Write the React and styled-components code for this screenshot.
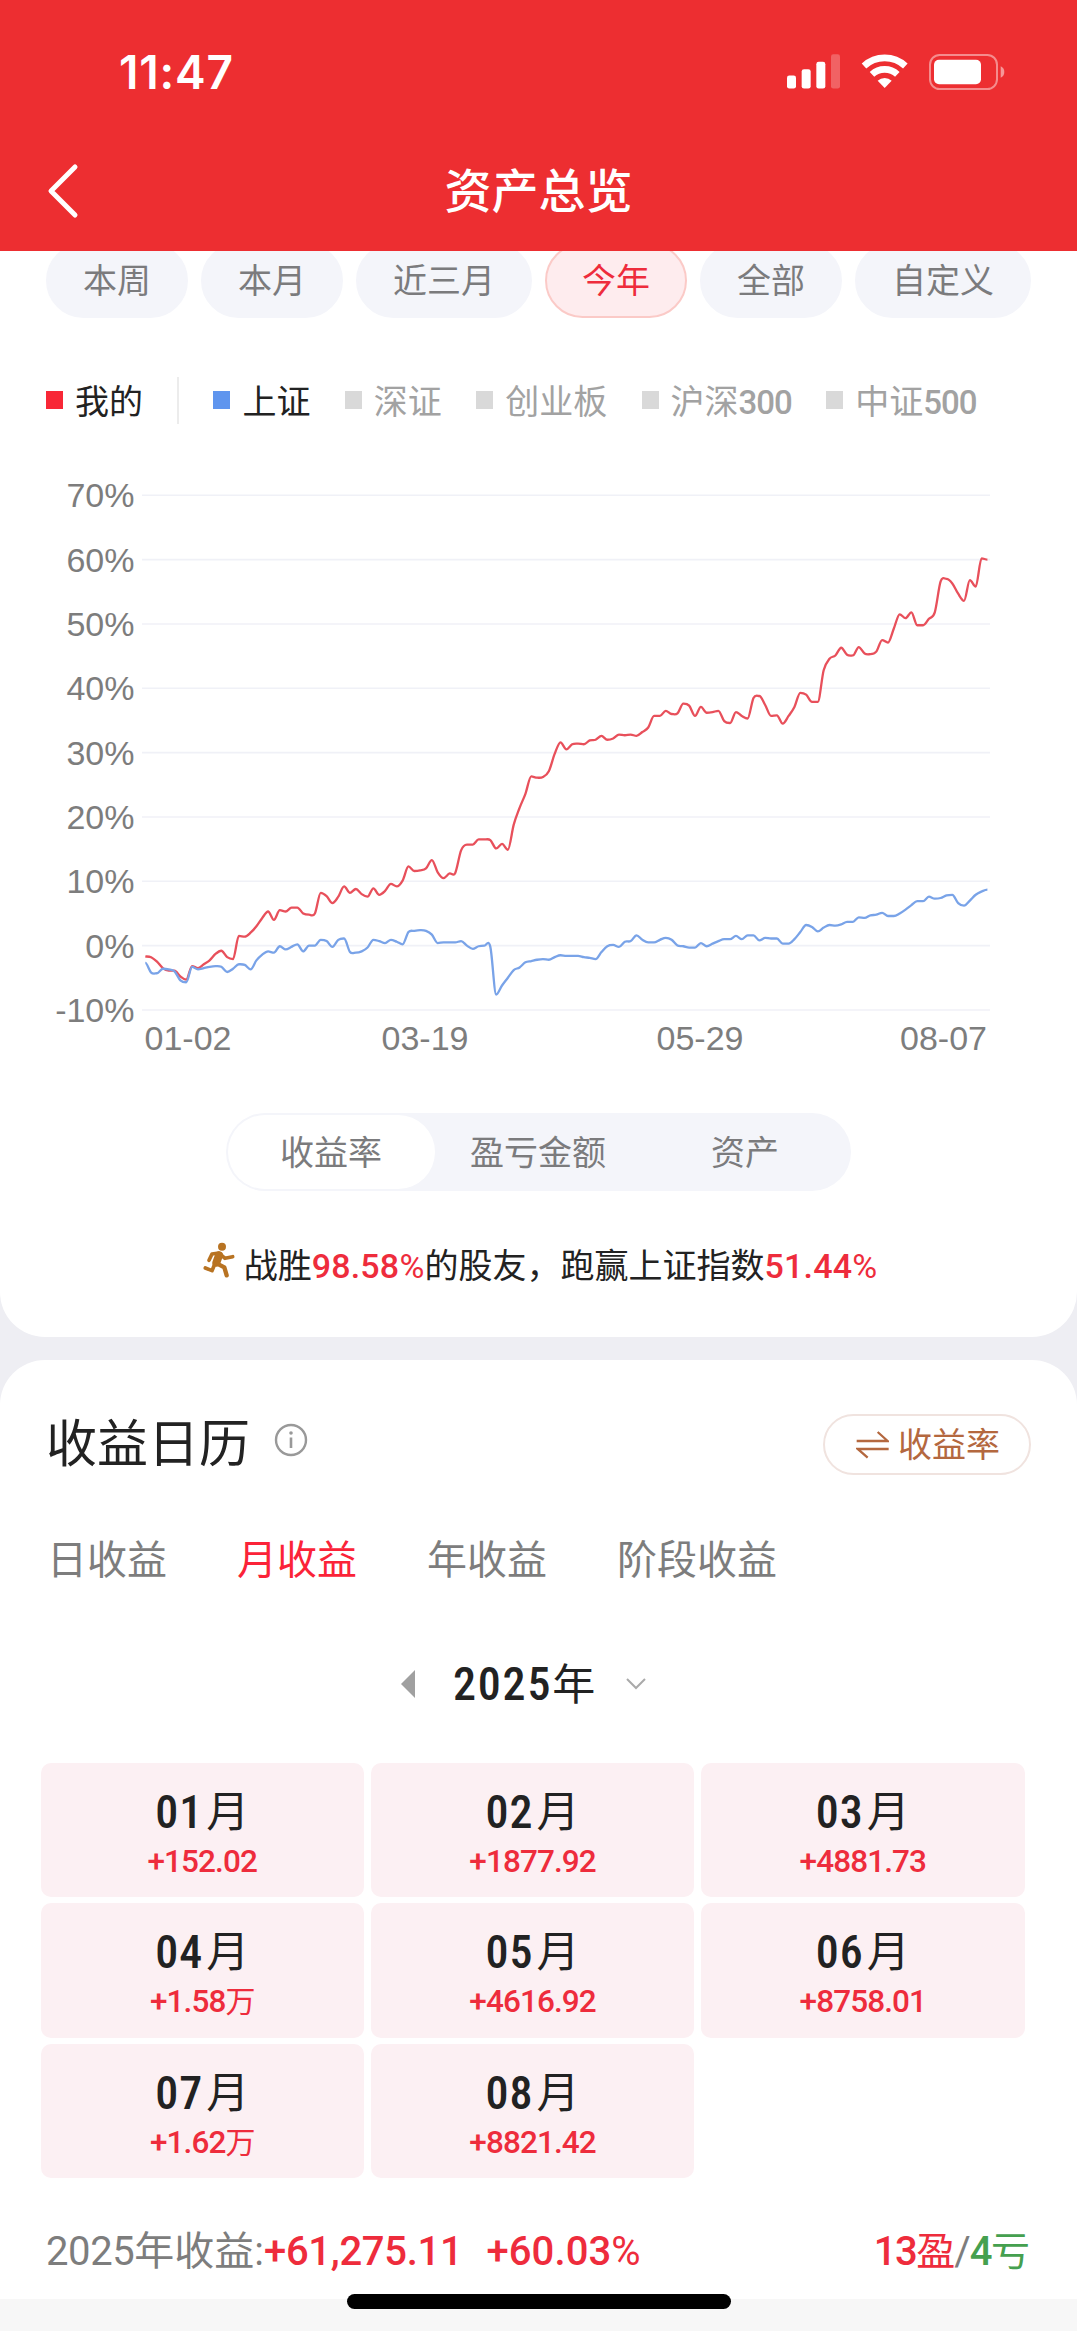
import styled, { createGlobalStyle } from "styled-components";

const GlobalStyle = createGlobalStyle`
  * {
    box-sizing: border-box;
  }

  body {
    margin: 0;
    background-color: #eeeef3;
    font-family: Roboto, "Noto Sans CJK SC", sans-serif;
    line-height: 1;
  }
`;

const Page = styled.div`
  position: relative;
  width: 1077px;
  height: 2331px;
  overflow: hidden;
  background-color: #eeeef3;
`;

const Header = styled.header`
  position: relative;
  z-index: 1;
  height: 251px;
  background-color: #ed2e31;
  color: #fff;
`;

const StatusBar = styled.div`
  display: flex;
  justify-content: space-between;
  align-items: center;
  height: 142px;
  padding: 1px 72px 0 119px;
`;

const Clock = styled.span`
  font-family: Inter, sans-serif;
  font-size: 46px;
  font-weight: 600;
  letter-spacing: 0.8px;
`;

const StatusIcons = styled.div`
  display: flex;
  align-items: center;
  gap: 21px;
`;

const NavBar = styled.div`
  display: grid;
  grid-template-columns: 120px 1fr 120px;
  align-items: center;
  height: 98px;
`;

const BackIcon = styled.svg`
  margin-left: 46px;
`;

const NavTitle = styled.h1`
  margin: 0;
  text-align: center;
  font-size: 47px;
  font-weight: 500;
`;

const Card = styled.section`
  background-color: #fff;
  border-radius: ${(props) => props.$radius};
  overflow: hidden;
`;

const ChartCard = styled(Card)`
  height: 1086px;
`;

const CalendarCard = styled(Card)`
  height: 939px;
  margin-top: 23px;
  padding-top: 54px;
`;

const RangeList = styled.div`
  display: flex;
  gap: 13px;
  margin: -8px 46px 0;
`;

const RangeItem = styled.button`
  width: ${(props) => (props.$wide ? 176 : 142)}px;
  height: 75px;
  padding: 0 0 4px;
  border: 2px solid ${(props) => (props.$active ? "#fbcac7" : "#f4f5fa")};
  border-radius: 38px;
  background-color: ${(props) => (props.$active ? "#feecee" : "#f4f5fa")};
  color: ${(props) => (props.$active ? "#ee2c3c" : "#7b7b7d")};
  font-family: inherit;
  font-size: 34px;
`;

const Legend = styled.div`
  display: flex;
  align-items: center;
  height: 48px;
  margin: 58px 0 0 46px;
`;

const LegendItem = styled.div`
  display: flex;
  align-items: center;
  margin-right: 34.4px;
  color: ${(props) => (props.$on ? "#222" : "#a2a2a2")};
  font-size: 34px;
  white-space: nowrap;
`;

const LegendMark = styled.span`
  width: 17px;
  height: 18px;
  margin-right: 12px;
  background-color: ${(props) => props.$color};
`;

const LegendDivider = styled.span`
  width: 2px;
  height: 47px;
  margin-right: 34px;
  background-color: #ececec;
`;

const LegendName = styled.span`
  padding-top: 4px;
`;

const LegendNumber = styled.span`
  font-size: 33px;
  font-weight: 500;
  letter-spacing: -1px;
`;

const Chart = styled.svg`
  display: block;
  margin-top: 36px;
  font-family: "Liberation Sans", sans-serif;
  font-size: 34px;
`;

const Segmented = styled.div`
  display: flex;
  width: 625px;
  height: 78px;
  margin: 53px auto 0;
  padding: 2px;
  border-radius: 39px;
  background-color: #f4f5fa;
`;

const Segment = styled.button`
  flex: 1;
  padding: 0 1px 4px 0;
  border: none;
  border-radius: 37px;
  background-color: ${(props) => (props.$active ? "#fff" : "transparent")};
  color: #7b7b7d;
  font-family: inherit;
  font-size: 34px;
`;

const BeatLine = styled.p`
  display: flex;
  justify-content: center;
  align-items: center;
  height: 40px;
  margin: 55px 0 0;
  padding-left: 3px;
  color: #222;
  font-size: 34px;
  white-space: nowrap;
`;

const RunnerIcon = styled.svg`
  margin: -12px 9px 0 0;
`;

const Rate = styled.span`
  color: #ee2c3c;
  font-weight: 500;
  letter-spacing: 0.2px;
`;

const Percent = styled.span`
  font-weight: 400;
`;

const CardHead = styled.div`
  display: flex;
  align-items: center;
  height: 61px;
  padding: 0 46px;
`;

const CardTitle = styled.h2`
  margin: 0;
  color: #222;
  font-size: 51px;
  font-weight: 400;
`;

const InfoIcon = styled.svg`
  margin: -10px 0 0 24px;
`;

const SwitchButton = styled.button`
  display: flex;
  align-items: center;
  gap: 9px;
  width: 208px;
  height: 61px;
  margin-left: auto;
  padding: 0 0 0 31px;
  border: 2px solid #f0e3df;
  border-radius: 31px;
  background-color: #fff;
  color: #b4683f;
  font-family: inherit;
  font-size: 34px;
`;

const SwitchLabel = styled.span`
  padding-bottom: 4px;
`;

const Tabs = styled.div`
  display: flex;
  gap: 70px;
  height: 40px;
  margin: 66px 0 0 47px;
`;

const Tab = styled.span`
  color: ${(props) => (props.$active ? "#fb2338" : "#7d7d7d")};
  font-size: 40px;
  line-height: 40px;
`;

const YearPicker = styled.div`
  display: flex;
  align-items: center;
  height: 46px;
  margin: 80px 0 0 401px;
`;

const YearText = styled.span`
  margin: 0 31px 0 38px;
  color: #222;
  font-size: 43px;
`;

const BigNumber = styled.span`
  font-size: 46px;
  font-weight: 500;
  font-stretch: 75%;
  letter-spacing: ${(props) => props.$spacing || 1}px;
`;

const MonthGrid = styled.div`
  display: grid;
  grid-template-columns: repeat(3, 323.5px);
  grid-auto-rows: 134.5px;
  gap: 6px 6.8px;
  margin: 55.5px 0 0 40.5px;
`;

const MonthCell = styled.div`
  display: flex;
  flex-direction: column;
  align-items: center;
  padding-top: 26px;
  border-radius: 10px;
  background-color: #fcf0f3;
`;

const MonthName = styled.span`
  display: flex;
  gap: 3px;
  height: 46px;
  color: #222;
  font-size: 43px;
  line-height: 46px;
`;

const MonthAmount = styled.span`
  height: 32px;
  margin-top: 11px;
  color: #ee2c3c;
  font-size: 31.5px;
  font-weight: 500;
  letter-spacing: -0.9px;
  line-height: 32px;
`;

const Wan = styled.span`
  font-size: 30px;
  font-weight: 400;
`;

const Summary = styled.div`
  display: flex;
  align-items: center;
  height: 40px;
  margin: 54px 48px 0 46px;
  color: #7d7d7d;
  font-size: 40px;
  white-space: pre;
`;

const SummaryNumber = styled.span`
  color: ${(props) => props.$color || "#ee2c3c"};
  font-weight: ${(props) => props.$weight || 500};
  letter-spacing: ${(props) => props.$spacing || 0}px;
`;

const SummaryRate = styled(SummaryNumber)`
  margin-left: 24px;
`;

const WinLoss = styled.span`
  margin-left: auto;
  letter-spacing: -1px;
`;

const Colored = styled.span`
  color: ${(props) => props.$color};
  font-size: 39px;
`;

const BottomArea = styled.div`
  height: 32px;
  background-color: #f7f7f7;
`;

const HomeIndicator = styled.div`
  position: absolute;
  left: 347px;
  bottom: 22px;
  width: 384px;
  height: 15px;
  border-radius: 8px;
  background-color: #000;
`;

const ranges = [
  { label: "本周" },
  { label: "本月" },
  { label: "近三月", wide: true },
  { label: "今年", active: true },
  { label: "全部" },
  { label: "自定义", wide: true },
];

const indexes = [
  { name: "上证", color: "#5f95ee", on: true },
  { name: "深证", color: "#d9d9d9" },
  { name: "创业板", color: "#d9d9d9" },
  { name: "沪深", number: "300", color: "#d9d9d9" },
  { name: "中证", number: "500", color: "#d9d9d9" },
];

const months = [
  { month: "01", amount: "+152.02" },
  { month: "02", amount: "+1877.92" },
  { month: "03", amount: "+4881.73" },
  { month: "04", amount: "+1.58", wan: true },
  { month: "05", amount: "+4616.92" },
  { month: "06", amount: "+8758.01" },
  { month: "07", amount: "+1.62", wan: true },
  { month: "08", amount: "+8821.42" },
];

// daily return in percent, one value per trading day
const mine = [
  -1.7, -1.8, -2.5, -3.5, -3.9, -3.9, -4.8, -5.3, -3.2, -3.5, -2.9, -2.3, -1.3,
  -0.8, -1.8, -2.1, 1.5, 1.4, 2.0, 3.0, 4.3, 5.3, 4.0, 5.5, 5.3, 5.9, 5.9, 5.0,
  4.8, 5.0, 8.2, 7.7, 6.6, 7.6, 9.2, 8.2, 8.8, 8.0, 7.6, 8.9, 7.9, 8.5, 9.6,
  9.2, 10.1, 12.3, 11.6, 11.7, 12.0, 13.3, 11.4, 10.5, 11.2, 11.3, 14.8, 15.7,
  15.7, 16.5, 16.5, 16.4, 15.1, 15.8, 14.9, 18.8, 21.4, 23.6, 26.3, 26.1, 26.2,
  27.1, 29.8, 31.6, 30.5, 31.3, 31.4, 31.3, 31.9, 32.0, 32.6, 32.0, 32.2, 32.8,
  32.7, 32.8, 32.6, 33.2, 33.9, 35.7, 35.7, 36.5, 36.0, 36.1, 37.6, 37.3, 35.7,
  37.1, 36.2, 36.3, 36.5, 34.9, 34.6, 36.3, 35.7, 35.3, 38.5, 38.8, 37.4, 35.7,
  35.8, 34.5, 35.7, 37.1, 39.3, 39.0, 37.9, 37.9, 42.8, 44.6, 45.1, 46.3, 45.2,
  45.1, 46.4, 45.4, 45.3, 45.7, 47.5, 47.1, 49.3, 51.5, 50.9, 51.8, 49.8, 49.8,
  50.8, 51.8, 56.6, 57.0, 56.3, 54.7, 53.6, 56.8, 55.8, 60.2, 60.0,
];

const shanghai = [
  -2.7, -4.2, -4.3, -3.6, -3.7, -4.0, -5.4, -5.7, -3.3, -3.7, -3.5, -3.3, -3.2,
  -3.3, -4.1, -3.6, -2.9, -3.0, -3.7, -2.3, -1.4, -0.9, -1.1, -0.1, -0.6, -0.2,
  0.2, -0.9, 0, 0, 0.9, 0.7, -0.2, 0.9, 1.1, -1.0, -1.1, -0.9, -0.3, 0.9, 0.7,
  0.4, 0.9, 0.6, 0.2, 2.1, 2.3, 2.4, 2.3, 1.7, 0.4, 0.5, 0.5, 0.5, 0.7, 0,
  -0.5, -0.1, 0, -0.2, -7.6, -6.2, -5.0, -3.8, -3.4, -2.6, -2.4, -2.2, -2.1,
  -2.2, -1.8, -1.5, -1.6, -1.6, -1.6, -1.8, -1.9, -2.1, -1.0, -0.1, 0.1, -0.2,
  0.6, 0.7, 1.6, 0.9, 0.5, 0.5, 0.9, 1.2, 0.9, 0, -0.1, -0.3, -0.3, 0.4, -0.1,
  0.3, 0.7, 1.0, 1.0, 1.5, 1.0, 1.6, 1.6, 0.8, 1.2, 1.1, 1.1, 0.3, 0.3, 1.0,
  2.1, 3.2, 2.9, 2.2, 2.8, 3.2, 3.1, 3.3, 3.7, 3.7, 4.4, 4.3, 4.7, 4.8, 5.1,
  4.6, 4.6, 5.0, 5.6, 6.3, 6.9, 6.9, 7.6, 7.3, 7.4, 7.8, 7.9, 6.6, 6.2, 7.0,
  7.9, 8.4, 8.7,
];

const ticks = [70, 60, 50, 40, 30, 20, 10, 0, -10];

const dates = [
  { x: 144.5, label: "01-02" },
  { x: 381.5, label: "03-19" },
  { x: 656.5, label: "05-29" },
  { x: 900, label: "08-07" },
];

const toX = (i) => 145.3 + i * 5.848;
const toY = (value) => 485.6 - value * 6.433;

// smooth curve that stays flat on every local peak and dip
const toPath = (values) => {
  const slope = values.map((value, i) => {
    const before = value - values[i - 1];
    const after = values[i + 1] - value;
    return before * after > 0 ? (before + after) / 2 : 0;
  });

  return values
    .map((value, i) => {
      if (i === 0) return `M${toX(0)} ${toY(value)}`;
      const c1 = `${toX(i - 0.67)} ${toY(values[i - 1] + slope[i - 1] / 3)}`;
      const c2 = `${toX(i - 0.33)} ${toY(value - slope[i] / 3)}`;
      return `C${c1} ${c2} ${toX(i)} ${toY(value)}`;
    })
    .join(" ");
};

const ReturnChart = () => {
  return (
    <Chart width="1077" height="600" viewBox="0 0 1077 600" fill="#7d7d7d">
      {ticks.map((tick) => (
        <g key={tick}>
          <line
            x1="142"
            x2="990"
            y1={toY(tick)}
            y2={toY(tick)}
            stroke="#f0f1f7"
            strokeWidth="1.6"
          />
          <text x="134.5" y={toY(tick) + 12} textAnchor="end">
            {tick}%
          </text>
        </g>
      ))}
      <path d={toPath(mine)} fill="none" stroke="#e8505b" strokeWidth="2.3" />
      <path
        d={toPath(shanghai)}
        fill="none"
        stroke="#79a3e8"
        strokeWidth="2.3"
      />
      {dates.map((date) => (
        <text key={date.label} x={date.x} y="590">
          {date.label}
        </text>
      ))}
    </Chart>
  );
};

const PhoneStatus = () => {
  return (
    <StatusIcons>
      <svg width="53" height="35" viewBox="84 72 159 104" fill="#fff">
        <rect x="84" y="136" width="27" height="39" rx="7" />
        <rect x="128" y="117" width="27" height="58" rx="7" />
        <rect x="172" y="95" width="27" height="80" rx="7" />
        <rect x="216" y="72" width="27" height="103" rx="7" opacity="0.25" />
      </svg>
      <svg width="47" height="35" viewBox="304 71 141 105" fill="none">
        <path d="M313 107A91 91 0 0 1 437 107" stroke="#fff" strokeWidth="20" />
        <path d="M337 132A56 56 0 0 1 413 132" stroke="#fff" strokeWidth="20" />
        <path d="M354 151A32 32 0 0 1 396 151L375 173Z" fill="#fff" />
      </svg>
      <svg width="76" height="36" viewBox="507 70 228 108" fill="#fff">
        <rect
          x="510"
          y="73"
          width="201"
          height="102"
          rx="29"
          fill="none"
          stroke="#fff"
          strokeWidth="6"
          opacity="0.45"
        />
        <rect x="522" y="87" width="141" height="74" rx="15" />
        <path d="M722 107Q733 112 733 124Q733 136 722 141Z" opacity="0.5" />
      </svg>
    </StatusIcons>
  );
};

const App = () => {
  return (
    <Page>
      <GlobalStyle />
      <Header>
        <StatusBar>
          <Clock>11:47</Clock>
          <PhoneStatus />
        </StatusBar>
        <NavBar>
          <BackIcon width="34" height="56" viewBox="0 0 34 56" fill="none">
            <path
              d="M29 4L5 28L29 52"
              stroke="#fff"
              strokeWidth="5"
              strokeLinecap="round"
              strokeLinejoin="round"
            />
          </BackIcon>
          <NavTitle>资产总览</NavTitle>
        </NavBar>
      </Header>

      <ChartCard $radius="0 0 45px 45px">
        <RangeList>
          {ranges.map((range) => (
            <RangeItem
              key={range.label}
              $wide={range.wide}
              $active={range.active}
            >
              {range.label}
            </RangeItem>
          ))}
        </RangeList>
        <Legend>
          <LegendItem $on>
            <LegendMark $color="#f82736" />
            <LegendName>我的</LegendName>
          </LegendItem>
          <LegendDivider />
          {indexes.map((item) => (
            <LegendItem key={item.name} $on={item.on}>
              <LegendMark $color={item.color} />
              <LegendName>
                {item.name}
                {item.number && <LegendNumber>{item.number}</LegendNumber>}
              </LegendName>
            </LegendItem>
          ))}
        </Legend>
        <ReturnChart />
        <Segmented>
          <Segment $active>收益率</Segment>
          <Segment>盈亏金额</Segment>
          <Segment>资产</Segment>
        </Segmented>
        <BeatLine>
          <RunnerIcon
            width="32"
            height="36"
            viewBox="39 50 96 108"
            fill="none"
            stroke="#b87322"
            strokeWidth="11"
            strokeLinecap="round"
            strokeLinejoin="round"
          >
            <circle cx="96" cy="64" r="12" fill="#b87322" stroke="none" />
            <path d="M57 105L66 86L87 83L105 99L128 94" />
            <path d="M87 90L79 112" strokeWidth="24" />
            <path d="M80 114L103 126L110 150" strokeWidth="13" />
            <path d="M74 117L66 136L46 128" />
          </RunnerIcon>
          战胜
          <Rate>
            98.58<Percent>%</Percent>
          </Rate>
          的股友，跑赢上证指数
          <Rate>
            51.44<Percent>%</Percent>
          </Rate>
        </BeatLine>
      </ChartCard>

      <CalendarCard $radius="45px 45px 0 0">
        <CardHead>
          <CardTitle>收益日历</CardTitle>
          <InfoIcon width="34" height="34" viewBox="0 0 34 34" fill="none">
            <circle cx="17" cy="17" r="15" stroke="#999" strokeWidth="2.4" />
            <circle cx="17" cy="10" r="1.8" fill="#999" />
            <path d="M17 14.5V25" stroke="#999" strokeWidth="2.6" />
          </InfoIcon>
          <SwitchButton>
            <svg
              width="33"
              height="28"
              viewBox="168 92 99 84"
              fill="none"
              stroke="#b4683f"
              strokeWidth="7"
            >
              <path d="M170 122H263L233 95" />
              <path d="M266 146H173L203 172" />
            </svg>
            <SwitchLabel>收益率</SwitchLabel>
          </SwitchButton>
        </CardHead>
        <Tabs>
          <Tab>日收益</Tab>
          <Tab $active>月收益</Tab>
          <Tab>年收益</Tab>
          <Tab>阶段收益</Tab>
        </Tabs>
        <YearPicker>
          <svg width="14" height="28" viewBox="0 0 14 28">
            <path d="M14 0V28L0 14Z" fill="#a0a0a0" />
          </svg>
          <YearText>
            <BigNumber $spacing={1.8}>2025</BigNumber>年
          </YearText>
          <svg width="20" height="12" viewBox="0 0 20 12" fill="none">
            <path d="M1 1L10 10L19 1" stroke="#aaa" strokeWidth="2" />
          </svg>
        </YearPicker>
        <MonthGrid>
          {months.map((item) => (
            <MonthCell key={item.month}>
              <MonthName>
                <BigNumber>{item.month}</BigNumber>
                <span>月</span>
              </MonthName>
              <MonthAmount>
                {item.amount}
                {item.wan && <Wan>万</Wan>}
              </MonthAmount>
            </MonthCell>
          ))}
        </MonthGrid>
        <Summary>
          <SummaryNumber $color="#7d7d7d" $weight={400} $spacing={-0.4}>
            2025
          </SummaryNumber>
          年收益:
          <SummaryNumber $spacing={-0.3}>+61,275.11</SummaryNumber>
          <SummaryRate $spacing={0.1}>
            +60.03<Percent>%</Percent>
          </SummaryRate>
          <WinLoss>
            <SummaryNumber $spacing={-1.5}>13</SummaryNumber>
            <Colored $color="#ee2c3c">盈</Colored>/
            <SummaryNumber $color="#45a04f" $spacing={-1.5}>
              4
            </SummaryNumber>
            <Colored $color="#45a04f">亏</Colored>
          </WinLoss>
        </Summary>
      </CalendarCard>
      <BottomArea />
      <HomeIndicator />
    </Page>
  );
};

export default App;
